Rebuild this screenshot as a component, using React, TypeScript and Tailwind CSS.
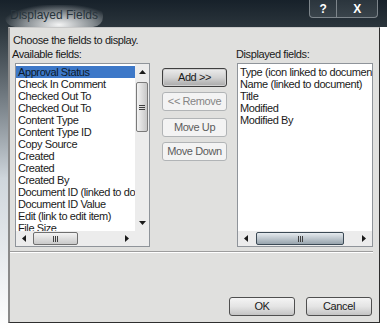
import React from "react";

const availableFields = [
  "Approval Status",
  "Check In Comment",
  "Checked Out To",
  "Checked Out To",
  "Content Type",
  "Content Type ID",
  "Copy Source",
  "Created",
  "Created",
  "Created By",
  "Document ID (linked to document)",
  "Document ID Value",
  "Edit (link to edit item)",
  "File Size",
];

const displayedFields = [
  "Type (icon linked to document)",
  "Name (linked to document)",
  "Title",
  "Modified",
  "Modified By",
];

function Arrow({ dir }: { dir: "up" | "down" | "left" | "right" }) {
  const pts = {
    up: "0,4 3.5,0 7,4",
    down: "0,0 7,0 3.5,4",
    left: "4,0 4,7 0,3.5",
    right: "0,0 4,3.5 0,7",
  }[dir];
  const w = dir === "up" || dir === "down" ? 7 : 4;
  const h = dir === "up" || dir === "down" ? 4 : 7;
  return (
    <svg width={w} height={h} viewBox={`0 0 ${w} ${h}`}>
      <polygon points={pts} fill="#1a1a1a" />
    </svg>
  );
}

function Grip({ vertical }: { vertical?: boolean }) {
  return vertical ? (
    <div className="flex flex-col gap-[1px]">
      <div className="h-[1px] w-[6px] bg-[#3f3f3f]" />
      <div className="h-[1px] w-[6px] bg-[#3f3f3f]" />
      <div className="h-[1px] w-[6px] bg-[#3f3f3f]" />
    </div>
  ) : (
    <div className="flex gap-[1px]">
      <div className="h-[6px] w-[1px] bg-[#3f3f3f]" />
      <div className="h-[6px] w-[1px] bg-[#3f3f3f]" />
      <div className="h-[6px] w-[1px] bg-[#3f3f3f]" />
    </div>
  );
}

function HScroll({ thumbLeft, thumbWidth, dark }: { thumbLeft: number; thumbWidth: number; dark?: boolean }) {
  return (
    <div className="flex h-[15px] flex-1 items-center bg-[#ececec]">
      <div className="flex h-full w-[16px] items-center justify-center">
        <Arrow dir="left" />
      </div>
      <div className="flex h-full flex-1 items-center">
        <div className="h-full" style={{ width: thumbLeft }} />
        <div
          className={
            "flex h-[13px] items-center justify-center rounded-[2px] border " +
            (dark
              ? "border-[#3c4a55] bg-gradient-to-b from-[#e6ebef] to-[#98a4ad]"
              : "border-[#6f6f6f] bg-gradient-to-b from-[#f3f3f3] to-[#c9c9c9]")
          }
          style={{ width: thumbWidth }}
        >
          <Grip />
        </div>
      </div>
      <div className="flex h-full w-[16px] items-center justify-center">
        <Arrow dir="right" />
      </div>
    </div>
  );
}

function Btn({
  children,
  variant = "normal",
  className = "",
}: React.PropsWithChildren<{ variant?: "normal" | "default" | "disabled" | "faded"; className?: string }>) {
  const styles = {
    normal: "border-[#4f4f4f] bg-gradient-to-b from-[#f4f4f4] via-[#e4e4e4] to-[#c4c4c4] text-[#1a1a1a]",
    default: "border-[#3f3f3f] bg-gradient-to-b from-[#ececec] via-[#d2d2d2] to-[#a9a9a9] text-[#1a1a1a] shadow-[inset_0_0_0_1px_#cfcfcf]",
    disabled: "border-[#b1b4b6] bg-[#f3f3f3] text-[#5c5c5c]",
    faded: "border-[#b1b4b6] bg-[#f3f3f3] text-[#858585]",
  }[variant];
  return (
    <div className={"flex items-center justify-center rounded-[3px] border text-[11px] " + styles + " " + className}>
      {children}
    </div>
  );
}

export default function App() {
  return (
    <div
      className="flex h-[330px] w-[387px] flex-col overflow-hidden bg-white text-[11px] tracking-[-0.4px] text-[#1a1a1a]"
      style={{ fontFamily: '"Liberation Sans", Arial, sans-serif' }}
    >
      {/* title bar */}
      <div className="flex h-[27px] items-start bg-gradient-to-b from-[#17212a] to-[#2b353c]">
        <div className="ml-[5px] mt-[5px] rounded-[10px] bg-[radial-gradient(ellipse_at_55%_90%,rgba(255,255,255,0.95),rgba(210,214,216,0.55)_45%,rgba(120,128,134,0)_75%)] px-[5px] pb-[5px] pt-[3px] text-[12px] leading-[14px] tracking-normal text-[#27333b]">
          Displayed Fields
        </div>
        <div className="ml-auto mr-[9px] flex h-[18px] overflow-hidden rounded-b-[4px] border border-t-0 border-[#7d858b] bg-gradient-to-b from-[#2b353d] to-[#3a444b]">
          <div className="flex w-[27px] items-center justify-center border-r border-[#7d858b] text-[12px] font-bold text-white">?</div>
          <div className="flex w-[40px] items-center justify-center text-[12px] font-bold text-white">X</div>
        </div>
      </div>

      <div className="flex flex-1">
        <div className="w-[8px] bg-gradient-to-b from-[#2b353c] via-[#cfd6dc] to-white" />

        {/* dialog client area */}
        <div className="flex h-[296px] w-[372px] flex-col border-b border-l-2 border-r border-t border-b-[#2e2e2e] border-l-[#8a8a8a] border-r-[#2e2e2e] border-t-[#c9c9c9] bg-[#e0e0de]">
          <div className="pl-[3px] pt-[5px] leading-[14px]">Choose the fields to display.</div>
          <div className="flex leading-[14px]">
            <div className="w-[226px] pl-[2px]">Available fields:</div>
            <div>Displayed fields:</div>
          </div>

          <div className="mt-[2px] flex items-start">
            {/* available list */}
            <div className="ml-[5px] flex h-[184px] w-[135px] flex-col border border-[#8f949a] bg-white">
              <div className="flex min-h-0 flex-1">
                <div className="flex-1 overflow-hidden pt-[2px]">
                  {availableFields.map((f, i) => (
                    <div
                      key={i}
                      className={
                        "h-[12px] whitespace-nowrap pl-[2px] leading-[12px] " +
                        (i === 0 ? "bg-[#3d78c8] text-[#0d1a2a]" : "")
                      }
                    >
                      {f}
                    </div>
                  ))}
                </div>
                {/* vertical scrollbar */}
                <div className="flex w-[14px] flex-col items-center bg-[#ececec]">
                  <div className="flex h-[16px] items-center justify-center">
                    <Arrow dir="up" />
                  </div>
                  <div className="mt-[2px] flex h-[50px] w-[12px] items-center justify-center rounded-[2px] border border-[#7a7a7a] bg-gradient-to-r from-[#f3f3f3] to-[#c7c7c7]">
                    <Grip vertical />
                  </div>
                  <div className="flex-1" />
                  <div className="flex h-[16px] items-center justify-center">
                    <Arrow dir="down" />
                  </div>
                </div>
              </div>
              <div className="flex">
                <HScroll thumbLeft={1} thumbWidth={45} />
                <div className="h-[15px] w-[14px] bg-[#ececec]" />
              </div>
            </div>

            {/* buttons */}
            <div className="ml-[12px] flex w-[65px] flex-col pt-[5px]">
              <Btn variant="default" className="h-[19px]">Add &gt;&gt;</Btn>
              <Btn variant="faded" className="mt-[5px] h-[19px]">&lt;&lt; Remove</Btn>
              <Btn variant="disabled" className="mt-[7px] h-[19px]">Move Up</Btn>
              <Btn variant="disabled" className="mt-[5px] h-[19px]">Move Down</Btn>
            </div>

            {/* displayed list */}
            <div className="ml-[10px] flex h-[184px] w-[136px] flex-col border border-[#8f949a] bg-white">
              <div className="min-h-0 flex-1 overflow-hidden pt-[2px]">
                {displayedFields.map((f, i) => (
                  <div key={i} className="h-[12px] whitespace-nowrap pl-[2px] leading-[12px]">
                    {f}
                  </div>
                ))}
              </div>
              <div className="flex">
                <HScroll thumbLeft={2} thumbWidth={88} dark />
              </div>
            </div>
          </div>

          {/* separator */}
          <div className="mr-[6px] mt-[4px] h-[2px] border-b border-t border-b-white border-t-[#9d9d9d]" />

          <div className="mt-auto mb-[6px] mr-[7px] flex justify-end gap-[11px]">
            <Btn className="h-[19px] w-[66px]">OK</Btn>
            <Btn className="h-[19px] w-[66px]">Cancel</Btn>
          </div>
        </div>

        <div className="flex-1 bg-white" />
      </div>
    </div>
  );
}
